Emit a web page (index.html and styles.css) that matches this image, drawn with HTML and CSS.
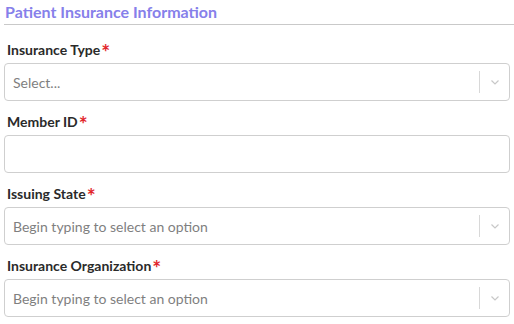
FILE: index.html
```html
<!DOCTYPE html>
<html lang="en">
<head>
  <meta charset="UTF-8">
  <meta name="viewport" content="width=device-width, initial-scale=1.0">
  <title>Patient Insurance Information</title>
  <link rel="stylesheet" href="styles.css">
</head>

<body>
  <div class="form">
    <h2 class="section-title">Patient Insurance Information</h2>

    <div class="field">
      <label>Insurance Type<span class="req">*</span></label>
      <div class="select">
        <span class="placeholder">Select...</span>
        <span class="sep"></span>
        <span class="arrow">
          <svg width="8" height="5" viewBox="0 0 8 5"><path d="M0.5 0.5 L4 4 L7.5 0.5" fill="none" stroke="#c8c8c8" stroke-width="1.2"/></svg>
        </span>
      </div>
    </div>

    <div class="field">
      <label>Member ID<span class="req">*</span></label>
      <input class="text-input" type="text">
    </div>

    <div class="field">
      <label>Issuing State<span class="req">*</span></label>
      <div class="select">
        <span class="placeholder">Begin typing to select an option</span>
        <span class="sep"></span>
        <span class="arrow">
          <svg width="8" height="5" viewBox="0 0 8 5"><path d="M0.5 0.5 L4 4 L7.5 0.5" fill="none" stroke="#c8c8c8" stroke-width="1.2"/></svg>
        </span>
      </div>
    </div>

    <div class="field">
      <label>Insurance Organization<span class="req">*</span></label>
      <div class="select">
        <span class="placeholder">Begin typing to select an option</span>
        <span class="sep"></span>
        <span class="arrow">
          <svg width="8" height="5" viewBox="0 0 8 5"><path d="M0.5 0.5 L4 4 L7.5 0.5" fill="none" stroke="#c8c8c8" stroke-width="1.2"/></svg>
        </span>
      </div>
    </div>
  </div>
</body>
</html>
```

FILE: styles.css
```css
body {
  margin: 0;
  font-family: 'Lato', 'Liberation Sans', sans-serif;
  background: #fff;
  color: #333;
}

.form {
  padding: 0 4px;
}

.section-title {
  margin: 0 -4px 0 0;
  padding: 1px 1px 0;
  height: 23px;
  line-height: 22px;
  font-size: 16px;
  font-weight: 700;
  color: #8680ea;
  border-bottom: 1px solid #c9c9c9;
}

.field {
  margin-top: 12px;
}

.field:first-of-type {
  margin-top: 16px;
}

.field label {
  display: block;
  height: 22px;
  line-height: 11px;
  padding-left: 3px;
  font-size: 14px;
  font-weight: 700;
  color: #2a2a2a;
}

.req {
  color: #e2262c;
  font-size: 21px;
  position: relative;
  top: 5px;
  margin-left: 1px;
}

.select {
  display: flex;
  align-items: center;
  height: 38px;
  box-sizing: border-box;
  border: 1px solid #cfcfcf;
  border-radius: 4px;
}

.placeholder {
  flex: 1;
  padding-left: 8px;
  font-size: 14px;
  color: #7f7f7f;
}

.sep {
  width: 1px;
  align-self: stretch;
  margin: 7px 0;
  background: #d8d8d8;
}

.arrow {
  width: 29px;
  display: flex;
  justify-content: center;
  align-items: center;
}

.text-input {
  display: block;
  width: 100%;
  height: 38px;
  box-sizing: border-box;
  border: 1px solid #cfcfcf;
  border-radius: 4px;
  margin: 0;
}
```
